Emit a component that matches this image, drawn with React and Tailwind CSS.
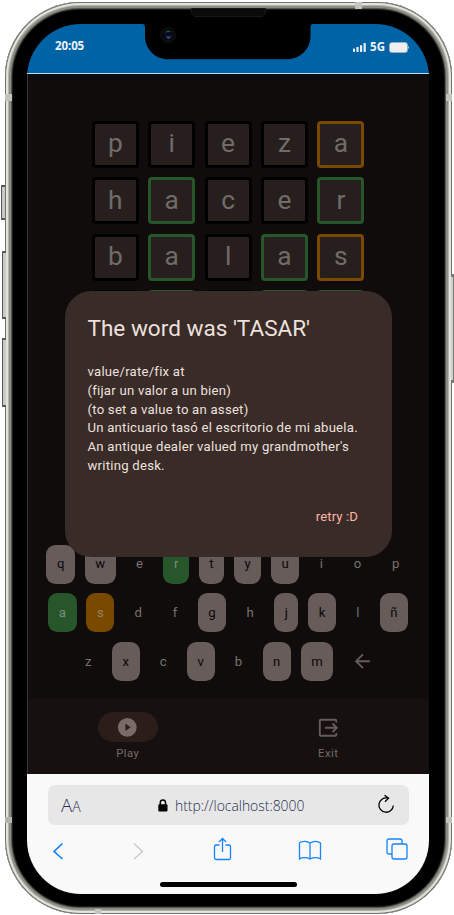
import React from "react";

const GUESSES = [
  [["p", "n"], ["i", "n"], ["e", "n"], ["z", "n"], ["a", "o"]],
  [["h", "n"], ["a", "g"], ["c", "n"], ["e", "n"], ["r", "g"]],
  [["b", "n"], ["a", "g"], ["l", "n"], ["a", "g"], ["s", "o"]],
  [["", "n"], ["", "g"], ["", "n"], ["", "g"], ["", "g"]],
];

const TILE = {
  n: "border-black",
  g: "border-[#265629]",
  o: "border-[#7a4900]",
};

// u: used, x: unused, g: correct place, o: misplaced
const KEYS = [
  [["q", "u"], ["w", "u"], ["e", "x"], ["r", "g"], ["t", "u"], ["y", "u"], ["u", "u"], ["i", "x"], ["o", "x"], ["p", "x"]],
  [["a", "g"], ["s", "o"], ["d", "x"], ["f", "x"], ["g", "u"], ["h", "x"], ["j", "u"], ["k", "u"], ["l", "x"], ["ñ", "u"]],
  [["z", "x"], ["x", "u"], ["c", "x"], ["v", "u"], ["b", "x"], ["n", "u"], ["m", "u"]],
];

const KEY = {
  u: "bg-[#675c5a] text-[#0b0808]",
  x: "text-[#777271]",
  g: "bg-[#265629] text-[#7f8a7d]",
  o: "bg-[#7a4900] text-[#948168]",
};

function StatusBar() {
  return (
    <header className="relative flex h-[50px] shrink-0 justify-between border-b border-[#c5d9ea] bg-[#0063a6] pl-[28px] pr-[20px] pt-[14px] font-['Open_Sans',sans-serif] text-[11.500px] font-bold leading-[15px] text-[#eef3f8]">
      <span className="tracking-[-0.1px]">20:05</span>
      <div className="flex h-[18px] items-center gap-[4px]">
        <svg width="13" height="9" viewBox="0 0 13 9" fill="#e9eef4">
          <rect x="0" y="5.5" width="2" height="3.5" rx=".4" />
          <rect x="3.4" y="4" width="2.2" height="5" rx=".4" />
          <rect x="7" y="2.2" width="2.2" height="6.8" rx=".4" />
          <rect x="10.6" y="0" width="2.2" height="9" rx=".4" />
        </svg>
        <span className="-mt-px">5G</span>
        <svg width="20" height="11" viewBox="0 0 20 11">
          <rect x=".5" y=".5" width="18" height="10" rx="2.6" fill="#efefef" stroke="#9cb3c4" strokeWidth=".8" />
          <path d="M19 4q1.600 1.500 0 3z" fill="#efefef" />
        </svg>
      </div>
      <svg className="absolute left-[116px] top-[-1px]" width="170" height="37" viewBox="0 0 170 37">
        <path d="M-1 0H171V1C168.500 1 167.500 2 167.500 5V14C167 27 156 36.300 144 36.300H25C13 36.300 2.500 27 2 14V5C2 2 1 1-1 1Z" fill="#000" />
        <circle cx="25" cy="12" r="8.200" fill="#0b0b0d" />
        <circle cx="25" cy="12" r="4.200" fill="#090d1b" />
        <path d="M22 10q3-4 6-1q-3-1-6 1z" fill="#2b6460" />
        <path d="M22.500 13q3 1 6 0q-2 4-4 2.500z" fill="#2e4796" />
      </svg>
    </header>
  );
}

function Board() {
  return (
    <div className="flex flex-col items-center gap-[9.400px] pr-[0.800px] pt-[47px]">
      {GUESSES.map((row, i) => (
        <div key={i} className="flex gap-[9.400px]">
          {row.map(([ch, s], j) => (
            <div
              key={j}
              className={`flex h-[47px] w-[47px] items-center justify-center rounded-[4px] border-[3px] bg-[#271f1e] pb-[2px] text-[26.300px] leading-none text-[#716b6a] ${TILE[s]}`}
            >
              {ch}
            </div>
          ))}
        </div>
      ))}
    </div>
  );
}

function Keyboard() {
  return (
    <div className="flex flex-col items-center gap-[9.700px] pr-[0.500px]">
      {KEYS.map((row, i) => (
        <div key={i} className="flex gap-[9.700px]">
          {row.map(([ch, s]) => (
            <div key={ch} className={`flex h-[39px] items-center justify-center rounded-[9.400px] px-[10.600px] text-[13.150px] ${KEY[s]}`}>
              {ch}
            </div>
          ))}
          {i === 2 && (
            <div className="flex h-[39px] w-[39px] items-center justify-center">
              <svg width="22.600" height="22.600" viewBox="0 0 24 24" fill="#675c5a">
                <path d="M20 11H7.830l5.590-5.590L12 4l-8 8 8 8 1.410-1.410L7.830 13H20v-2z" />
              </svg>
            </div>
          )}
        </div>
      ))}
    </div>
  );
}

function NavBar() {
  return (
    <nav className="flex h-[75px] shrink-0 bg-[#171010] pr-[2px] text-[11.300px] leading-[15px] tracking-[0.47px] text-[#746b69]">
      <div className="flex flex-1 flex-col items-center gap-[4px] pt-[13px]">
        <div className="flex h-[30px] w-[60px] items-center justify-center rounded-full bg-[#2c1d1a]">
          <svg width="22.600" height="22.600" viewBox="0 0 24 24" fill="#796b68">
            <path d="M12 2a10 10 0 1 0 0 20 10 10 0 0 0 0-20zm-2 14v-8l5.500 4-5.500 4z" />
          </svg>
        </div>
        <span>Play</span>
      </div>
      <div className="flex flex-1 flex-col items-center gap-[4px] pt-[13px]">
        <div className="flex h-[30px] items-center pl-[2px]">
          <svg width="22.600" height="22.600" viewBox="0 0 24 24" fill="none" stroke="#675c5a" strokeWidth="2">
            <path d="M20.500 7V5q0-1-1-1H4q-1 0-1 1v15q0 1 1 1h15.500q1 0 1-1v-2M8.500 12.500h12.500M16.500 8l4.500 4.500-4.500 4.500" />
          </svg>
        </div>
        <span className="pl-[2px]">Exit</span>
      </div>
    </nav>
  );
}

function ResultDialog() {
  return (
    <div className="absolute left-[37px] top-[217px] flex h-[266px] w-[327px] flex-col rounded-[26.300px] bg-[#382b28] px-[22.500px] pt-[22.500px] text-[#ede0dd]">
      <h1 className="text-[22.550px] leading-[30px]">The word was 'TASAR'</h1>
      <div className="mt-[19.500px] whitespace-nowrap text-[13.150px] leading-[18.800px] tracking-[0.235px]">
        <p>value/rate/fix at</p>
        <p>(fijar un valor a un bien)</p>
        <p>(to set a value to an asset)</p>
        <p>Un anticuario tasó el escritorio de mi abuela.</p>
        <p>An antique dealer valued my grandmother's</p>
        <p>writing desk.</p>
      </div>
      <button className="mt-[31.500px] mr-[11.500px] self-end text-[13.150px] leading-[19px] tracking-[0.094px] text-[#ffb4a0]">retry :D</button>
    </div>
  );
}

function BrowserBar() {
  return (
    <footer className="flex h-[120px] shrink-0 flex-col bg-[#f9f9f9] pt-[11px] font-['Open_Sans',sans-serif]">
      <div className="ml-[21px] flex h-[40px] w-[360.500px] items-center rounded-[7px] bg-[#e7e7e7] pl-[13px] text-[#1f2f52]">
        <span className="w-[97px] whitespace-nowrap text-[18.500px] font-light leading-none">
          A<span className="text-[14px]">A</span>
        </span>
        <svg width="10" height="13" viewBox="0 0 10 13">
          <rect x=".3" y="5.300" width="9.200" height="7.200" rx="1" fill="#000" />
          <path d="M2.300 6V3.500a2.600 2.600 0 0 1 5.200 0V6" fill="none" stroke="#000" strokeWidth="1.500" />
        </svg>
        <span className="ml-[7px] w-[202px] pt-px text-[13.900px] font-light leading-[20px]">http://localhost:8000</span>
        <svg className="-mt-[3px]" width="18" height="20" viewBox="0 0 18 20" fill="none" stroke="#000" strokeWidth="1.300">
          <path d="M10.500 4A7.200 7.200 0 1 0 16.300 11.500M7.500 1.300l4 2.900-3.500 3.500" />
        </svg>
      </div>
      <div className="flex h-[46px] items-center pl-[25px] pt-[5px]">
        <svg width="12" height="18" viewBox="0 0 12 18" fill="none" stroke="#007aff" strokeWidth="1.500">
          <path d="M10.500 1.500 2 9.500l8.500 7.500" />
        </svg>
        <svg className="ml-[69px]" width="12" height="18" viewBox="0 0 12 18" fill="none" stroke="#cacaca" strokeWidth="1.400">
          <path d="M1 1.500 9.500 9.500 1 17" />
        </svg>
        <svg className="ml-[68px] -mt-[4px]" width="19" height="24" viewBox="0 0 19 24" fill="none" stroke="#1683ff" strokeWidth="1.300">
          <path d="M6.500 8H3Q1.500 8 1.500 9.500v11Q1.500 22.500 3 22.500h13Q17.500 22.500 17.500 21V9.500Q17.500 8 16 8h-3.500M9.500 15V1.500M6 5l3.500-3.500L13 5" />
        </svg>
        <svg className="ml-[66px]" width="24" height="21" viewBox="0 0 24 21" fill="none" stroke="#1683ff" strokeWidth="1.300">
          <path d="M12 3Q10 1.300 6.500 1.300T1.500 3v16q2-1.300 5-1.300T12 19q2.500-1.300 5.500-1.300T22.500 19V3Q20.500 1.300 17.500 1.300T12 3zV19" />
        </svg>
        <svg className="-mt-[3px] ml-[63.500px]" width="22" height="22" viewBox="0 0 22 22" fill="none" stroke="#1683ff" strokeWidth="1.300">
          <rect x="6" y="6" width="15" height="15" rx="2" />
          <path d="M6 16H3q-2 0-2-2V3q0-2 2-2h11q2 0 2 2v3" />
        </svg>
      </div>
      <div className="mx-auto mt-[11px] h-[5px] w-[137px] rounded-full bg-black" />
    </footer>
  );
}

const SIDE = "absolute w-[4px] rounded-l-[1px] border-y-2 border-l border-[#55575a] bg-[#c9cac6]";

export default function App() {
  return (
    <div className="h-[915px] w-[454px] overflow-hidden bg-white pl-[5px] pt-[2px] font-['Roboto',sans-serif]">
      <div className="relative h-[912px] w-[446.500px] rounded-[75px] bg-black pb-[20px] pl-[22px] pr-[22.500px] pt-[22px] shadow-[inset_0_0_0_1px_#73746f,inset_0_0_0_3px_#e3e3de,inset_0_0_0_4px_#b2b3ac,inset_0_0_0_6px_#8c8d85,inset_0_0_0_7px_#55564f,inset_0_0_0_8px_#1c1c1a]">
        <div className={`${SIDE} left-[-4px] top-[183px] h-[35px]`} />
        <div className={`${SIDE} left-[-3px] top-[249px] h-[68px]`} />
        <div className={`${SIDE} left-[-3px] top-[336px] h-[69px]`} />
        <div className="absolute right-[-2px] top-[272px] h-[109px] w-[3px] rounded-r-[1px] border-y-[3px] border-r border-[#777873] bg-[#cfd0cc]" />
        <div className="absolute left-0 top-[92px] h-[7px] w-[7px] bg-[#c2c4bf]" />
        <div className="absolute right-0 top-[92px] h-[7px] w-[6px] bg-[#c2c4bf]" />
        <div className="absolute left-0 top-[815px] h-[6px] w-[7px] bg-[#b2b4ae]" />
        <div className="absolute right-0 top-[815px] h-[6px] w-[6px] bg-[#c2c4bf]" />
        <div className="absolute left-[350px] top-0 h-[7px] w-[7px] bg-[#c2c4bf]" />
        <div className="absolute bottom-0 left-[90px] h-[5px] w-[6px] bg-[#c2c4bf]" />
        <div className="absolute left-[186px] top-[6px] h-[9px] w-[75px] rounded-b-[5px] border border-[#191919] bg-[#0b0b0b]" />
        <div className="flex h-[870px] w-[402px] flex-col overflow-hidden rounded-[54px]">
          <StatusBar />
          <main className="relative flex flex-1 flex-col border-l border-[#393635] bg-[#100c0b]">
            <Board />
            <div className="mt-auto pb-[18px]">
              <Keyboard />
            </div>
            <NavBar />
            <ResultDialog />
          </main>
          <BrowserBar />
        </div>
      </div>
    </div>
  );
}
